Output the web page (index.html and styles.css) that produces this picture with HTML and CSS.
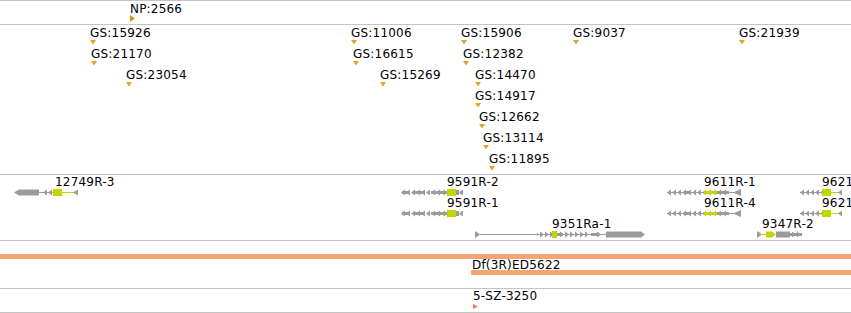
FILE: index.html
```html
<!DOCTYPE html>
<html lang="en">
  <head>
    <meta charset="UTF-8" />
    <title>Genome Browser</title>
    <link rel="stylesheet" href="styles.css">
  </head>
  <body>
    <div class="browser">
      <div class="track track-np">
        <div class="feat feat-np" style="left:130px;top:2px">
          <span class="label">NP:2566</span>
          <svg width="6" height="7"><polygon points="0,0 5,3.5 0,7" /></svg>
        </div>
      </div>

      <div class="track track-gs">
        <div class="feat" style="left:90px;top:2px"><span class="label">GS:15926</span><svg width="6" height="5"><polygon points="0,0 6,0 3,4.5" /></svg></div>
        <div class="feat" style="left:91px;top:23px"><span class="label">GS:21170</span><svg width="6" height="5"><polygon points="0,0 6,0 3,4.5" /></svg></div>
        <div class="feat" style="left:126px;top:44px"><span class="label">GS:23054</span><svg width="6" height="5"><polygon points="0,0 6,0 3,4.5" /></svg></div>
        <div class="feat" style="left:351px;top:2px"><span class="label">GS:11006</span><svg width="6" height="5"><polygon points="0,0 6,0 3,4.5" /></svg></div>
        <div class="feat" style="left:353px;top:23px"><span class="label">GS:16615</span><svg width="6" height="5"><polygon points="0,0 6,0 3,4.5" /></svg></div>
        <div class="feat" style="left:380px;top:44px"><span class="label">GS:15269</span><svg width="6" height="5"><polygon points="0,0 6,0 3,4.5" /></svg></div>
        <div class="feat" style="left:461px;top:2px"><span class="label">GS:15906</span><svg width="6" height="5"><polygon points="0,0 6,0 3,4.5" /></svg></div>
        <div class="feat" style="left:463px;top:23px"><span class="label">GS:12382</span><svg width="6" height="5"><polygon points="0,0 6,0 3,4.5" /></svg></div>
        <div class="feat" style="left:475px;top:44px"><span class="label">GS:14470</span><svg width="6" height="5"><polygon points="0,0 6,0 3,4.5" /></svg></div>
        <div class="feat" style="left:475px;top:65px"><span class="label">GS:14917</span><svg width="6" height="5"><polygon points="0,0 6,0 3,4.5" /></svg></div>
        <div class="feat" style="left:479px;top:86px"><span class="label">GS:12662</span><svg width="6" height="5"><polygon points="0,0 6,0 3,4.5" /></svg></div>
        <div class="feat" style="left:483px;top:107px"><span class="label">GS:13114</span><svg width="6" height="5"><polygon points="0,0 6,0 3,4.5" /></svg></div>
        <div class="feat" style="left:489px;top:128px"><span class="label">GS:11895</span><svg width="6" height="5"><polygon points="0,0 6,0 3,4.5" /></svg></div>
        <div class="feat" style="left:573px;top:2px"><span class="label">GS:9037</span><svg width="6" height="5"><polygon points="0,0 6,0 3,4.5" /></svg></div>
        <div class="feat" style="left:739px;top:2px"><span class="label">GS:21939</span><svg width="6" height="5"><polygon points="0,0 6,0 3,4.5" /></svg></div>
      </div>

      <div class="track track-gene">
        <svg class="glyphs" width="851" height="65" viewBox="0 175 851 65">
          <defs>
            <pattern id="la" width="5" height="7" patternUnits="userSpaceOnUse">
              <polygon points="0,3.5 4,0.5 4,6.5" fill="#9b9b9b" />
            </pattern>
            <pattern id="lay" width="5" height="7" patternUnits="userSpaceOnUse">
              <polygon points="0,3.5 4,0.5 4,6.5" fill="#c3d500" />
            </pattern>
            <pattern id="ra" width="5" height="7" patternUnits="userSpaceOnUse">
              <polygon points="0,0.5 4,3.5 0,6.5" fill="#9b9b9b" />
            </pattern>
            <g id="g9591">
              <rect x="1" y="2" width="8" height="3" class="g" />
              <rect x="14" y="2" width="8" height="3" class="g" />
              <rect x="30" y="2" width="16" height="3" class="g" />
              <rect x="0" y="0" width="46" height="7" fill="url(#la)" />
              <rect x="46" y="0" width="9" height="7" class="y" />
              <rect x="55" y="1" width="3" height="5" class="g" />
              <polygon points="58,3.5 61,1 61,6" class="g" />
              <rect x="61" y="1" width="1" height="5" class="g" />
            </g>
            <g id="g9611">
              <rect x="0" y="3" width="37" height="1" class="g" />
              <rect x="18" y="2" width="4" height="3" class="g" />
              <rect x="0" y="0" width="37" height="7" fill="url(#la)" />
              <rect x="37" y="2" width="13" height="3" class="y" />
              <rect x="37" y="0" width="13" height="7" fill="url(#lay)" />
              <rect x="50" y="2" width="12" height="3" class="g" />
              <rect x="50" y="0" width="12" height="7" fill="url(#la)" />
              <rect x="62" y="3" width="5" height="1" class="g" />
              <polygon points="66,3.5 74,0 74,7" class="g" />
            </g>
            <g id="g9621">
              <rect x="0" y="3" width="22" height="1" class="g" />
              <rect x="0" y="0" width="22" height="7" fill="url(#la)" />
              <rect x="22" y="0" width="9" height="7" class="y" />
              <rect x="31" y="3" width="8" height="1" class="y" />
              <polygon points="38,3.5 42,0.5 42,6.5" class="g" />
            </g>
          </defs>

          <!-- 12749R-3 -->
          <g transform="translate(13,189)">
            <polygon points="1,3.5 6,0.5 26,0.5 26,6.5 6,6.5" class="g" />
            <rect x="26" y="3" width="6" height="1" class="g" />
            <rect x="30" y="3" width="10" height="1" class="g" />
            <rect x="30" y="0" width="10" height="7" fill="url(#la)" />
            <rect x="40" y="0" width="9" height="7" class="y" />
            <rect x="49" y="3" width="12" height="1" class="y" />
            <polygon points="60,3.5 65,0.5 65,6.5" class="g" />
          </g>

          <use href="#g9591" x="401" y="189" />
          <use href="#g9591" x="401" y="210" />

          <!-- 9351Ra-1 -->
          <g transform="translate(475,231)">
            <rect x="0" y="0.5" width="1" height="6" class="g" />
            <polygon points="1,0.5 5,3.5 1,6.5" class="g" />
            <rect x="5" y="3" width="57" height="1" class="g" />
            <rect x="62" y="3" width="15" height="1" class="g" />
            <rect x="62" y="0" width="15" height="7" fill="url(#ra)" />
            <rect x="77" y="0" width="5" height="7" class="y" />
            <rect x="82" y="2" width="6" height="3" class="g" />
            <rect x="88" y="3" width="36" height="1" class="g" />
            <rect x="82" y="0" width="30" height="7" fill="url(#ra)" />
            <rect x="116" y="2" width="6" height="3" class="g" />
            <polygon points="122,0.5 126,3.5 122,6.5" class="g" />
            <rect x="124" y="3" width="7" height="1" class="g" />
            <polygon points="131,0.5 166,0.5 170,3.5 166,6.5 131,6.5" class="g" />
          </g>

          <use href="#g9611" x="667" y="189" />
          <use href="#g9611" x="667" y="210" />
          <use href="#g9621" x="800" y="189" />
          <use href="#g9621" x="800" y="210" />

          <!-- 9347R-2 -->
          <g transform="translate(757,231)">
            <rect x="0" y="0.5" width="1" height="6" class="g" />
            <polygon points="1,0.5 5,3.5 1,6.5" class="g" />
            <rect x="5" y="3" width="6" height="1" class="y" />
            <polygon points="9,0.5 15,0.5 19,3.5 15,6.5 9,6.5" class="y" />
            <rect x="19" y="0.5" width="14" height="6" class="g" />
            <rect x="33" y="2" width="12" height="3" class="g" />
            <rect x="33" y="0" width="12" height="7" fill="url(#ra)" />
          </g>
        </svg>

        <span class="label gene-label" style="left:55px;top:1px">12749R-3</span>
        <span class="label gene-label" style="left:447px;top:1px">9591R-2</span>
        <span class="label gene-label" style="left:447px;top:22px">9591R-1</span>
        <span class="label gene-label" style="left:552px;top:43px">9351Ra-1</span>
        <span class="label gene-label" style="left:704px;top:1px">9611R-1</span>
        <span class="label gene-label" style="left:704px;top:22px">9611R-4</span>
        <span class="label gene-label" style="left:822px;top:1px">9621R-1</span>
        <span class="label gene-label" style="left:822px;top:22px">9621R-2</span>
        <span class="label gene-label" style="left:762px;top:43px">9347R-2</span>
      </div>

      <div class="track track-df">
        <div class="df-bar"></div>
        <div class="feat feat-df" style="left:471px;top:18px">
          <span class="label">Df(3R)ED5622</span>
          <div class="df-bar"></div>
        </div>
      </div>

      <div class="track track-sz">
        <div class="feat feat-sz" style="left:473px;top:1px">
          <span class="label">5-SZ-3250</span>
          <svg width="6" height="6"><polygon points="0,0 5,2.5 0,5" /></svg>
        </div>
      </div>
    </div>
  </body>
</html>
```

FILE: styles.css
```css
body {
  margin: 0;
  background: #fff;
  font-family: "DejaVu Sans", Verdana, sans-serif;
  font-size: 12px;
  color: #000;
  overflow: hidden;
}
.browser {
  width: 851px;
  border-bottom: 1px solid #c4c4c4;
  overflow: hidden;
}
.track {
  position: relative;
  border-top: 1px solid #c4c4c4;
}
.track-np {
  height: 23px;
}
.track-gs {
  height: 149px;
}
.track-gene {
  height: 65px;
}
.track-df {
  height: 47px;
}
.track-sz {
  height: 23px;
}
.feat {
  position: absolute;
}
.label {
  display: block;
  line-height: 12px;
  white-space: nowrap;
  letter-spacing: 0.2px;
}
.feat svg {
  display: block;
  margin-top: 1px;
}
.feat svg polygon {
  fill: #e3a424;
}
.feat-np svg {
  margin-top: 0;
}
.feat-np svg polygon {
  fill: #cf9416;
}
.feat-sz svg {
  margin-top: 2px;
}
.feat-sz svg polygon {
  fill: #f27a5a;
}
.glyphs {
  position: absolute;
  top: 0;
  left: 0;
}
.glyphs .g {
  fill: #9b9b9b;
}
.glyphs .y {
  fill: #c3d500;
}
.gene-label {
  position: absolute;
}
.df-bar {
  height: 5px;
  background: #f4a570;
}
.track-df > .df-bar {
  margin-top: 13px;
}
.feat-df {
  width: 380px;
}
.feat-df .label {
  padding-left: 1px;
}
.feat-df .df-bar {
  margin-top: -1px;
}
```
